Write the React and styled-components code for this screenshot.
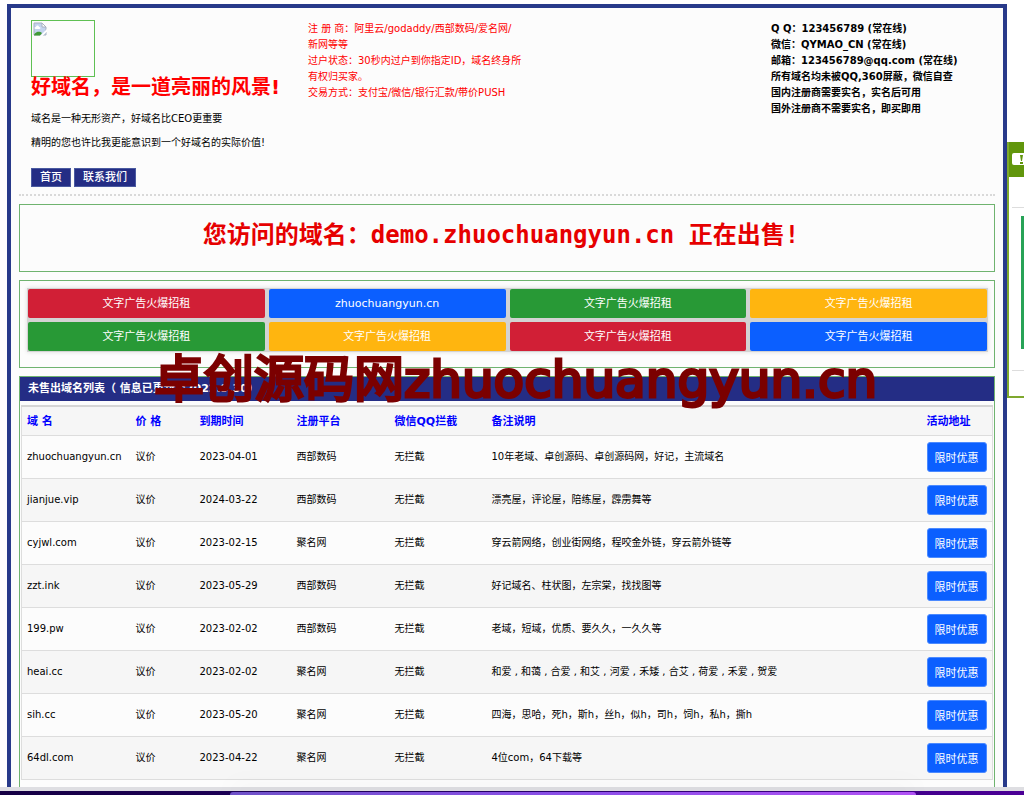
import { Fragment } from 'react';
import styled, { createGlobalStyle } from 'styled-components';

const GlobalStyle = createGlobalStyle`
  * { box-sizing: border-box; }
  body {
    margin: 0;
    background: #fff;
    color: #000;
    font: 10px/16px "DejaVu Sans", "Noto Sans CJK SC", sans-serif;
  }
  a { color: inherit; text-decoration: none; }
  p, h1, h2 { margin: 0; }
`;

const Screen = styled.div`
  height: 100vh;
  display: flex;
  flex-direction: column;
  overflow: hidden;
`;

const Viewport = styled.div`
  flex: 1;
  min-height: 0;
  overflow: hidden;
  padding: 4px 17px 0 7px;
`;

const Page = styled.div`
  position: relative;
  border: 4px solid #283a8a;
  background: #fcfcfc;
  padding: 12px 8px 40px;
`;

const Header = styled.header`
  display: grid;
  grid-template-columns: 277px 463px 1fr;
  padding: 0 0 7px 12px;
  border-bottom: 2px dotted #d9d9d9;
`;

const Logo = styled.div`
  width: 64px;
  height: 57px;
  padding: 1px;
  border: 1px solid #5fc053;
  svg { display: block; }
`;

const Slogan = styled.h1`
  color: #f00;
  font-size: 20px;
  line-height: 20px;
  margin-bottom: 10px;
  white-space: nowrap;
`;

const Intro = styled.p`
  line-height: 24px;
  white-space: nowrap;
`;

const Nav = styled.nav`
  display: flex;
  gap: 3px;
  margin-top: 13px;
`;

const NavLink = styled.a`
  padding: 0 8px;
  border: 1px solid #4a5aa0;
  background: #242d85;
  color: #fff;
  font-size: 11px;
  font-weight: 500;
  line-height: 17px;
`;

const Info = styled.p`
  padding-top: 1px;
  color: ${props => props.$red ? '#f00' : '#000'};
  font-weight: ${props => props.$red ? 400 : 700};
  white-space: nowrap;
`;

const Box = styled.section`
  margin-top: 8px;
  border: 1px solid #6fb36f;
`;

const Title = styled.h2`
  padding: 14px 12px 20px 0;
  color: #e60000;
  font: bold 24px/32px "DejaVu Sans Mono", "Noto Sans CJK SC", monospace;
  text-align: center;
`;

const Ads = styled.div`
  display: grid;
  grid-template-columns: repeat(4, 1fr);
  gap: 4px;
  margin: 7px 6px 15px 7px;
  padding: 1px;
  background: #d3d3d3;
  box-shadow: 0 0 4px #ddd;
`;

const Ad = styled.a`
  border-radius: 2px;
  background: ${props => props.$color};
  color: #fff;
  font-size: 11px;
  line-height: 29px;
  text-align: center;
`;

const ListTitle = styled.h2`
  padding: 0 8px;
  background: #242d85;
  color: #fff;
  font-size: 11px;
  line-height: 24px;
`;

const Table = styled.table`
  width: calc(100% - 2px);
  margin: 4px 1px 8px;
  border-collapse: collapse;
  table-layout: fixed;
  border: 1px solid #ddd;
  border-top: 2px solid #d5d5d5;
  text-align: left;

  th, td { padding: 0 0 0 5px; }
  th {
    height: 29px;
    padding-top: 2px;
    color: #00f;
    font-size: 11px;
  }
  td { height: 43px; }
  tr { border-bottom: 1px solid #ddd; background: #fcfcfc; }
  tr:nth-child(even), thead tr { background: #f6f6f6; }
`;

const Deal = styled.button`
  display: block;
  width: 60px;
  height: 30px;
  padding: 0;
  border: 1px solid #4b8aff;
  border-radius: 3px;
  background: #0b5fff;
  color: #fff;
  font: 11px "DejaVu Sans", "Noto Sans CJK SC", sans-serif;
`;

const Watermark = styled.div`
  position: absolute;
  top: 342px;
  left: 143px;
  color: #7b0000;
  font-size: 50px;
  line-height: 60px;
  white-space: nowrap;
  pointer-events: none;
  -webkit-text-stroke: 3px #7b0000;
`;

const Side = styled.aside`
  position: fixed;
  top: 142px;
  right: 0;
  width: 17px;
  height: 256px;
  border: solid #7fa82e;
  border-width: 0 0 2px 2px;
  background: #fff;
  overflow: hidden;
`;

const SideHead = styled.div`
  height: 35px;
  padding: 11px 0 0 2px;
  background: #61960c;
  svg { display: block; }
`;

const SideBody = styled.div`
  margin: 30px 0 0 3px;
  padding: 8px 0 21px 9px;
  border: solid #ddd;
  border-width: 1px 0;
`;

const SideCard = styled.div`
  height: 133px;
  background: #27a357;
`;

const Dock = styled.div`
  position: relative;
  height: 8px;
  padding: 1px 10.5% 0 22.5%;
  border-top: 4px solid #dedee2;
  background: linear-gradient(90deg, #150044, #25006a 50%, #4b0096);
`;

const DockGlow = styled.div`
  height: 3px;
  border-radius: 8px 8px 0 0;
  background: linear-gradient(90deg, #6f52c8, #8b4fe8 50%, #b152f5);
  box-shadow: 0 -2px 24px rgba(0, 0, 0, 0.15);
`;

const ads = [
  ['文字广告火爆招租', '#d11f36'],
  ['zhuochuangyun.cn', '#0b5fff'],
  ['文字广告火爆招租', '#289936'],
  ['文字广告火爆招租', '#ffb50f'],
  ['文字广告火爆招租', '#289936'],
  ['文字广告火爆招租', '#ffb50f'],
  ['文字广告火爆招租', '#d11f36'],
  ['文字广告火爆招租', '#0b5fff'],
];

const columns = [
  ['域 名', 109], ['价 格', 64], ['到期时间', 97], ['注册平台', 98],
  ['微信QQ拦截', 97], ['备注说明'], ['活动地址', 71],
];

const domains = [
  ['zhuochuangyun.cn', '2023-04-01', '西部数码', '10年老域、卓创源码、卓创源码网，好记，主流域名'],
  ['jianjue.vip', '2024-03-22', '西部数码', '漂亮屋，评论屋，陪练屋，霹雳舞等'],
  ['cyjwl.com', '2023-02-15', '聚名网', '穿云箭网络，创业街网络，程咬金外链，穿云箭外链等'],
  ['zzt.ink', '2023-05-29', '西部数码', '好记域名、柱状图，左宗棠，找找图等'],
  ['199.pw', '2023-02-02', '西部数码', '老域，短域，优质、要久久，一久久等'],
  ['heai.cc', '2023-02-02', '聚名网', '和爱 , 和蔼 , 合爱 , 和艾 , 河爱 , 禾矮 , 合艾 , 荷爱 , 禾爱 , 贺爱'],
  ['sih.cc', '2023-05-20', '聚名网', '四海，思哈，死h，斯h，丝h，似h，司h，饲h，私h，撕h'],
  ['64dl.com', '2023-04-22', '聚名网', '4位com，64下载等'],
];

const registrar = [
  '注 册 商：阿里云/godaddy/西部数码/爱名网/',
  '新网等等',
  '过户状态：30秒内过户到你指定ID，域名终身所',
  '有权归买家。',
  '交易方式：支付宝/微信/银行汇款/带价PUSH',
];

const contact = [
  'Q Q：123456789 (常在线)',
  '微信：QYMAO_CN (常在线)',
  '邮箱：123456789@qq.com (常在线)',
  '所有域名均未被QQ,360屏蔽，微信自查',
  '国内注册商需要实名，实名后可用',
  '国外注册商不需要实名，即买即用',
];

const Lines = ({ items }) => items.map(line => <Fragment key={line}>{line}<br /></Fragment>);

const BrokenImage = () => (
  <svg width="14" height="14" viewBox="0 0 14 14">
    <path d="M1 1h8l4 4v8H1z" fill="#c3d3ee" stroke="#a9b2c0" />
    <path d="M9 1v4h4z" fill="#fff" stroke="#a9b2c0" />
    <path d="M3 5c0-2 3-2 3 0 2 0 2 2 0 2H3C1 7 1 5 3 5z" fill="#fff" />
    <path d="M1 13.500c0-3 5-5.500 8-2.500l-2 2.500z" fill="#3f9a35" />
    <path d="M7 14l7-7v2.500L9.500 14z" fill="#fff" />
  </svg>
);

const ChatIcon = () => (
  <svg width="16" height="14" viewBox="0 0 16 14">
    <path d="M3 0h13v12H3a2 2 0 0 1-2-2V2a2 2 0 0 1 2-2z" fill="#fff" />
    <path d="M9 2h3l-1 6h-1zM9 9h3v2H9z" fill="#61960c" />
  </svg>
);

const App = () => {
  return (
    <Screen>
      <GlobalStyle />
      <Viewport>
        <Page>
          <Header>
            <div>
              <Logo><BrokenImage /></Logo>
              <Slogan>好域名，是一道亮丽的风景!</Slogan>
              <Intro>域名是一种无形资产，好域名比CEO更重要</Intro>
              <Intro>精明的您也许比我更能意识到一个好域名的实际价值!</Intro>
              <Nav>
                <NavLink href="#">首页</NavLink>
                <NavLink href="#contact">联系我们</NavLink>
              </Nav>
            </div>
            <Info $red><Lines items={registrar} /></Info>
            <Info id="contact"><Lines items={contact} /></Info>
          </Header>
          <Box>
            <Title>您访问的域名：demo.zhuochuangyun.cn 正在出售!</Title>
          </Box>
          <Box>
            <Ads>
              {ads.map(([text, color], i) => <Ad key={i} href="#" $color={color}>{text}</Ad>)}
            </Ads>
          </Box>
          <Box>
            <ListTitle>未售出域名列表（ 信息已更新至2022.9.30）</ListTitle>
            <Table>
              <colgroup>
                {columns.map(([name, width]) => <col key={name} width={width} />)}
              </colgroup>
              <thead>
                <tr>{columns.map(([name]) => <th key={name}>{name}</th>)}</tr>
              </thead>
              <tbody>
                {domains.map(([name, date, platform, note]) => (
                  <tr key={name}>
                    <td>{name}</td>
                    <td>议价</td>
                    <td>{date}</td>
                    <td>{platform}</td>
                    <td>无拦截</td>
                    <td>{note}</td>
                    <td><Deal type="button">限时优惠</Deal></td>
                  </tr>
                ))}
              </tbody>
            </Table>
          </Box>
          <Watermark>卓创源码网zhuochuangyun.cn</Watermark>
        </Page>
      </Viewport>
      <Side>
        <SideHead><ChatIcon /></SideHead>
        <SideBody><SideCard /></SideBody>
      </Side>
      <Dock><DockGlow /></Dock>
    </Screen>
  );
}

export default App;
